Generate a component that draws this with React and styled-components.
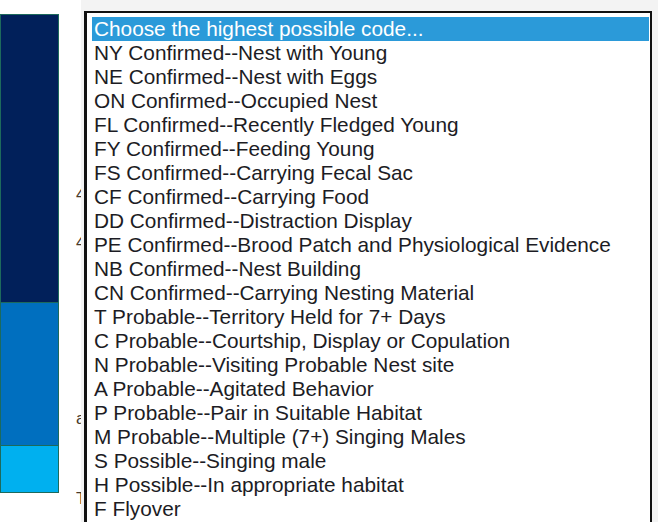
import React from 'react';
import styled, { createGlobalStyle } from 'styled-components';

const codes = [
  'Choose the highest possible code...',
  'NY Confirmed--Nest with Young',
  'NE Confirmed--Nest with Eggs',
  'ON Confirmed--Occupied Nest',
  'FL Confirmed--Recently Fledged Young',
  'FY Confirmed--Feeding Young',
  'FS Confirmed--Carrying Fecal Sac',
  'CF Confirmed--Carrying Food',
  'DD Confirmed--Distraction Display',
  'PE Confirmed--Brood Patch and Physiological Evidence',
  'NB Confirmed--Nest Building',
  'CN Confirmed--Carrying Nesting Material',
  'T Probable--Territory Held for 7+ Days',
  'C Probable--Courtship, Display or Copulation',
  'N Probable--Visiting Probable Nest site',
  'A Probable--Agitated Behavior',
  'P Probable--Pair in Suitable Habitat',
  'M Probable--Multiple (7+) Singing Males',
  'S Possible--Singing male',
  'H Possible--In appropriate habitat',
  'F Flyover',
];

const GlobalStyle = createGlobalStyle`
  html, body {
    margin: 0;
    padding: 0;
    background: #ffffff;
    overflow: hidden;
  }
`;

const Page = styled.div`
  position: relative;
  width: 658px;
  height: 522px;
  overflow: hidden;
  display: flex;
  gap: 17px;
  font-family: 'Liberation Sans', Arial, sans-serif;
`;

const Legend = styled.div`
  margin-top: 14px;
  width: 59px;
  display: flex;
  flex-direction: column;
`;

const Swatch = styled.div`
  height: ${(p) => p.h}px;
  background: ${(p) => p.color};
  border: 1px solid #1d6a5c;
  border-top-width: ${(p) => (p.first ? 1 : 0)}px;
  box-sizing: border-box;
`;

const Behind = styled.div`
  display: flex;
  flex-direction: column;
  padding-top: 186px;
  font-size: 17px;
  color: #4a3a2a;
`;

const Peek = styled.div`
  margin-top: ${(p) => p.gap}px;
  line-height: 18px;
`;

const Popup = styled.div`
  position: absolute;
  left: 81px;
  top: 0;
  right: 0;
  bottom: 0;
  background: #f3f3f3;
  padding: 11px 6px 0 3px;
`;

const ListBox = styled.div`
  height: 100%;
  overflow: hidden;
  background: #ffffff;
  border-style: solid;
  border-color: #111111;
  border-width: 2px 2px 0 3px;
  padding: 4px 1px 0 5px;
  box-sizing: border-box;
`;

const Option = styled.div`
  height: 24px;
  line-height: 24px;
  padding-left: 2px;
  font-size: 20.8px;
  white-space: nowrap;
  color: ${(p) => (p.selected ? '#ffffff' : '#1c1c24')};
  background: ${(p) => (p.selected ? '#2b9ad9' : 'transparent')};
`;

export default function App() {
  return (
    <>
      <GlobalStyle />
      <Page>
        <Legend>
          <Swatch first h={289} color="#01205a" />
          <Swatch h={143} color="#006fbf" />
          <Swatch h={47} color="#00b0ef" />
        </Legend>
        <Behind>
          <Peek gap={0}>4</Peek>
          <Peek gap={30}>4</Peek>
          <Peek gap={158}>a</Peek>
          <Peek gap={62}>T</Peek>
        </Behind>
        <Popup>
          <ListBox>
            {codes.map((c, i) => (
              <Option key={c} selected={i === 0}>
                {c}
              </Option>
            ))}
          </ListBox>
        </Popup>
      </Page>
    </>
  );
}
